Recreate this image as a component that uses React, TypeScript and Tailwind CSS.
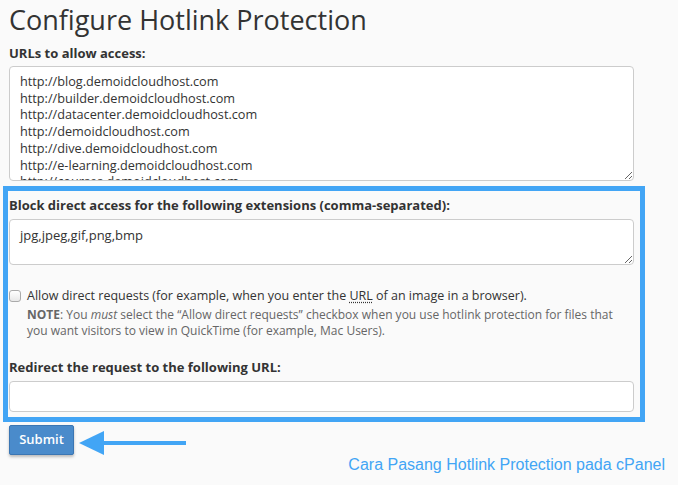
import React from "react";

const URLS = [
  "http://blog.demoidcloudhost.com",
  "http://builder.demoidcloudhost.com",
  "http://datacenter.demoidcloudhost.com",
  "http://demoidcloudhost.com",
  "http://dive.demoidcloudhost.com",
  "http://e-learning.demoidcloudhost.com",
  "http://courses.demoidcloudhost.com",
  "http://www.demoidcloudhost.com",
];

export default function App() {
  return (
    <div className="h-[485px] w-[678px] overflow-hidden bg-[#fafafa] font-['Open_Sans',sans-serif] text-[#333]">
      <h1 className="pl-[9px] pt-[2px] text-[27px] leading-[36px] font-normal">
        Configure Hotlink Protection
      </h1>

      <div className="pl-[9px] pr-[44px]">
        <label className="mt-[6px] block text-[13px] leading-[18px] font-bold">
          URLs to allow access:
        </label>
        <textarea
          readOnly
          defaultValue={URLS.join("\n")}
          className="mt-[4px] block h-[115px] w-[625px] resize-y overflow-hidden rounded-[4px] border border-[#ccc] bg-white px-[10px] pt-[6px] text-[12.7px] leading-[16.7px] text-[#333] outline-none"
        />
      </div>

      <div className="ml-[3px] mt-[5px] w-[642px] border-[5px] border-[#42a5f5] pl-[1px] pr-[6px] pt-[5px] pb-[5px]">
        <label className="block text-[13px] leading-[18px] font-bold">
          Block direct access for the following extensions (comma-separated):
        </label>
        <textarea
          readOnly
          defaultValue="jpg,jpeg,gif,png,bmp"
          className="mt-[5px] block h-[46px] w-[625px] resize-y overflow-hidden rounded-[4px] border border-[#ccc] bg-white px-[10px] pt-[6px] text-[13px] leading-[18px] text-[#333] outline-none"
        />

        <div className="mt-[22px] flex items-start gap-[6px]">
          <span className="mt-[3px] h-[12px] w-[12px] shrink-0 rounded-[3px] border border-[#aaa] bg-gradient-to-b from-white to-[#e8e8e8]" />
          <div>
            <p className="text-[12.5px] leading-[18px]">
              Allow direct requests (for example, when you enter the{" "}
              <abbr className="underline decoration-dotted underline-offset-2">URL</abbr>{" "}
              of an image in a browser).
            </p>
            <p className="mt-[2px] text-[12px] leading-[16px] text-[#666]">
              <b>NOTE</b>: You <i>must</i> select the “Allow direct requests” checkbox when you use hotlink protection for files
              that you want visitors to view in QuickTime (for example, Mac Users).
            </p>
          </div>
        </div>

        <label className="mt-[19px] block text-[13px] leading-[18px] font-bold">
          Redirect the request to the following URL:
        </label>
        <input
          readOnly
          className="mt-[5px] block h-[31px] w-[625px] rounded-[4px] border border-[#ccc] bg-white outline-none"
        />
      </div>

      <div className="relative h-[65px] pl-[9px]">
        <button className="mt-[3px] h-[30px] w-[65px] rounded-[2px] border border-[#3b76b3] bg-[#4a8bcb] text-[13px] font-semibold text-white shadow-[0_2px_3px_rgba(0,0,0,0.25)]">
          Submit
        </button>
        <svg
          className="absolute left-[79px] top-[8px]"
          width="108"
          height="26"
          viewBox="0 0 108 26"
        >
          <polygon points="0,13 25,1 25,25" fill="#42a5f5" />
          <rect x="24" y="11" width="83" height="4" fill="#42a5f5" />
        </svg>
        <span className="absolute right-[13px] top-[34px] font-['Liberation_Sans',Arial,sans-serif] text-[16px] leading-[18px] text-[#42a5f5]">
          Cara Pasang Hotlink Protection pada cPanel
        </span>
      </div>
    </div>
  );
}
